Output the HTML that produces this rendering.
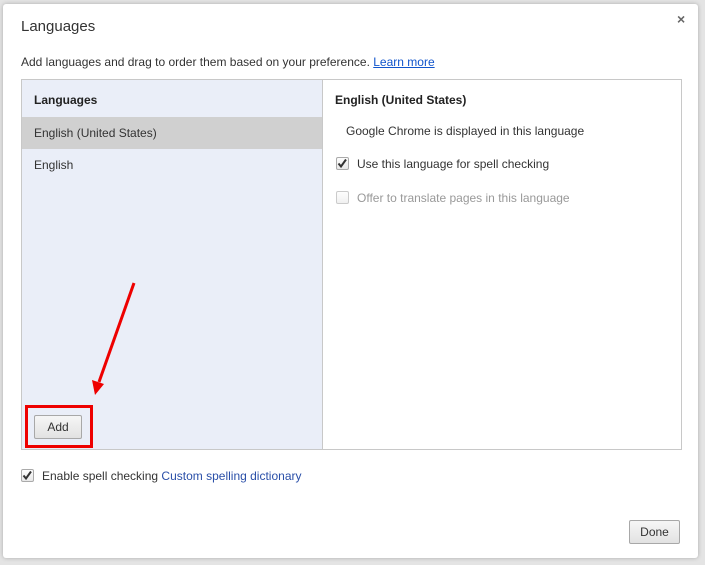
<!DOCTYPE html>
<html><head><meta charset="utf-8"><style>
*{margin:0;padding:0;box-sizing:border-box}
body{width:705px;height:565px;background:#e4e4e4;font-family:"Liberation Sans",sans-serif;position:relative;overflow:hidden;font-size:12px;color:#333}
.dlg{position:absolute;left:3px;top:4px;width:695px;height:554px;background:#fff;border-radius:3px;box-shadow:0 0 4px rgba(0,0,0,.25)}
.a{position:absolute;white-space:nowrap}
.panel{position:absolute;left:21px;top:79px;width:661px;height:371px;border:1px solid #c8c8c8}
.left{position:absolute;left:0;top:0;width:301px;height:369px;background:#eaeef8;border-right:1px solid #c8c8c8}
.btn{position:absolute;border:1px solid #a8a8a8;border-radius:2px;background:linear-gradient(#f6f6f6,#e2e2e2);text-align:center;color:#333;font-size:12px}
.cb{position:absolute;width:13px;height:13px;border:1px solid #aaa;border-radius:2px;background:linear-gradient(#fdfdfd,#e8e8e8)}
.cb svg{position:absolute;left:0;top:0}
</style></head><body>
<div class="dlg"></div>
<div class="a" style="left:21px;top:18px;font-size:15px;color:#333">Languages</div>
<div class="a" style="left:677px;top:11px;font-size:14px;font-weight:bold;color:#666">×</div>
<div class="a" style="left:21px;top:55px;font-size:12px">Add languages and drag to order them based on your preference. <span style="color:#15c;text-decoration:underline">Learn more</span></div>
<div class="panel">
 <div class="left">
  <div class="a" style="left:12px;top:13px;font-weight:bold;color:#222">Languages</div>
  <div style="position:absolute;left:0;top:37px;width:300px;height:32px;background:#d0d0d0"></div>
  <div class="a" style="left:12px;top:46px">English (United States)</div>
  <div class="a" style="left:12px;top:78px">English</div>
 </div>
 <div class="a" style="left:313px;top:13px;font-weight:bold;color:#222">English (United States)</div>
 <div class="a" style="left:324px;top:44px">Google Chrome is displayed in this language</div>
 <div class="cb" style="left:314px;top:77px"><svg width="11" height="11"><path d="M1.5 5.5 L4 8.5 L9 1.5" stroke="#333" stroke-width="2" fill="none"/></svg></div>
 <div class="a" style="left:335px;top:77px">Use this language for spell checking</div>
 <div class="cb" style="left:314px;top:111px;opacity:.6"></div>
 <div class="a" style="left:335px;top:111px;color:#999">Offer to translate pages in this language</div>
</div>
<div style="position:absolute;left:25px;top:405px;width:68px;height:43px;border:3px solid #e00"></div>
<div class="btn" style="left:34px;top:415px;width:48px;height:24px;line-height:22px">Add</div>
<svg style="position:absolute;left:0;top:0" width="705" height="565"><line x1="134" y1="283" x2="99" y2="382" stroke="#e00" stroke-width="3"/><polygon points="95,395 92,380 104,384" fill="#e00"/></svg>
<div class="cb" style="left:21px;top:469px"><svg width="11" height="11"><path d="M1.5 5.5 L4 8.5 L9 1.5" stroke="#333" stroke-width="2" fill="none"/></svg></div>
<div class="a" style="left:42px;top:469px">Enable spell checking <span style="color:#2a4fa8">Custom spelling dictionary</span></div>
<div class="btn" style="left:629px;top:520px;width:51px;height:24px;line-height:22px">Done</div>
</body></html>
